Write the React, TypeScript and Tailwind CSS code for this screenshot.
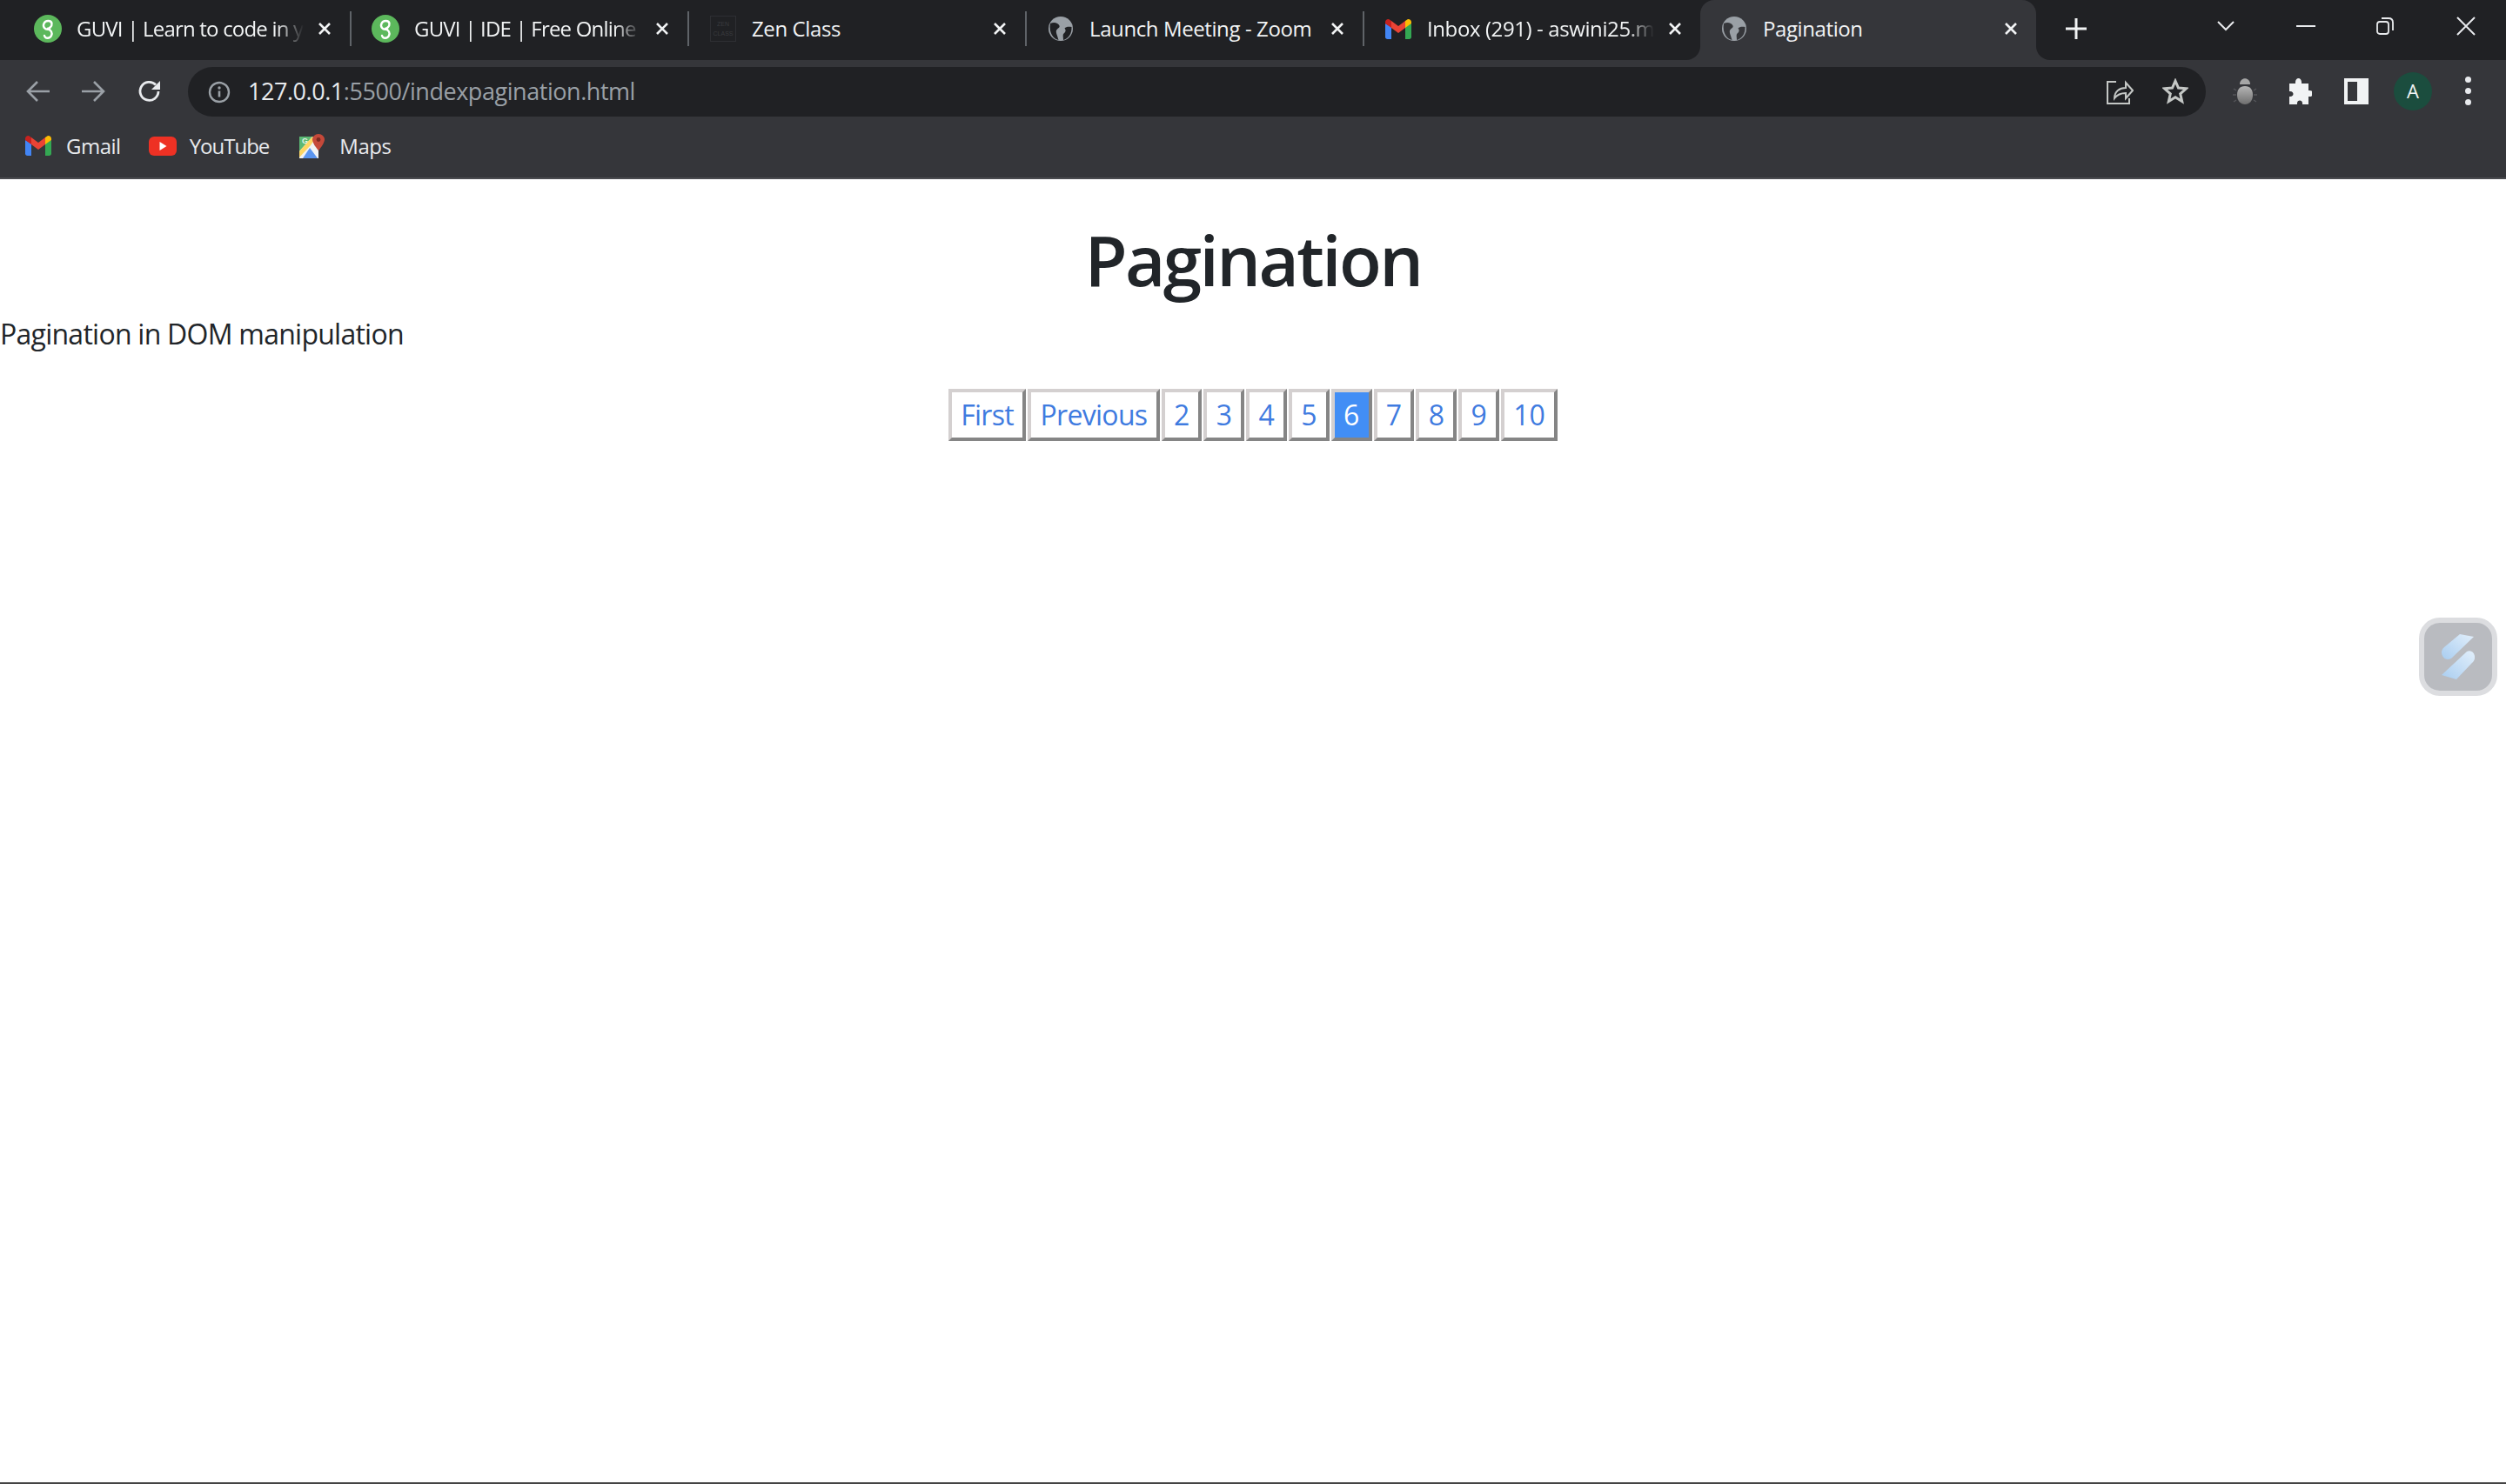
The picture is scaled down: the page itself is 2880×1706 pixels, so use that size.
import React from "react";

const uiFont = "font-['Open_Sans',sans-serif]";

function GuviIcon() {
  return (
    <svg width="32" height="32" viewBox="0 0 32 32">
      <circle cx="16" cy="16" r="16" fill="#5cb85c" />
      <path
        d="M18 16.500C12 18 10 13 11.500 10c1.500-4 8.500-4 9 0 .5 4-3.500 6-5.500 6 5 1 6.500 5 5 8-2 4-7 3.500-8 0"
        fill="none"
        stroke="#fff"
        strokeWidth="2.400"
        strokeLinecap="round"
      />
    </svg>
  );
}

function ZenIcon() {
  return (
    <div className="w-[30px] h-[30px] border border-[#2e2f33] flex flex-col items-center justify-center text-[7px] leading-[11px] text-[#3a3b3f] font-['Liberation_Sans',sans-serif]">
      <span>ZEN</span>
      <span>CLASS</span>
    </div>
  );
}

function GlobeIcon({ dark = "#202124" }: { dark?: string }) {
  return (
    <svg width="30" height="30" viewBox="0 0 30 30">
      <circle cx="15" cy="15" r="14" fill="#9aa0a6" />
      <path d="M3 9c4-2 9-1 10.500 2.500C14.500 14 11 14.500 10 17c-.8 2.500 1 5 2.500 11C7 27 1 20 3 9z" fill={dark} />
      <path d="M27.500 13c-3-.5-6.500-.5-8 1.500 2 2.500 1 4.500-1 6-1.500 1.500-.5 4-.5 7.500 6-1.500 10-7.500 9.500-15z" fill={dark} />
    </svg>
  );
}

function GmailIcon() {
  return (
    <svg width="30" height="23" viewBox="0 0 30 23">
      <path d="M0 5v15.500C0 22 1 23 2.500 23H7V9z" fill="#4285f4" />
      <path d="M30 5v15.500c0 1.500-1 2.500-2.500 2.500H23V9z" fill="#34a853" />
      <path d="M23 2v8l7-5V3.500C30 .5 26.500-1 24.500 1z" fill="#fbbc04" />
      <path d="M7 2v8l8 6 8-6V2l-8 6z" fill="#ea4335" />
      <path d="M0 3.500V5l7 5V2L5.500 1C3.500-1 0 .5 0 3.500z" fill="#c5221f" />
    </svg>
  );
}

function YoutubeIcon() {
  return (
    <svg width="32" height="22" viewBox="0 0 32 22">
      <rect width="32" height="22" rx="6" fill="#ee3124" />
      <path d="M12.500 6l8 5-8 5z" fill="#fff" />
    </svg>
  );
}

function MapsIcon() {
  return (
    <svg width="29" height="28" viewBox="0 0 29 28">
      <path d="M0 3h22v25H0z" fill="#f1f3f4" />
      <path d="M0 3h15L0 20z" fill="#5bb974" />
      <path d="M14 3h8v8l-4 3z" fill="#8ab4a0" />
      <path d="M0 20L15 3l3 3 -5 7L0 27z" fill="#fdd663" />
      <path d="M4 28l8-12 9 12z" fill="#5a95f0" />
      <text x="3" y="11" fontSize="9" fontWeight="700" fill="#e8f5e9" fontFamily="Liberation Sans, sans-serif">G</text>
      <path d="M22 0c-4 0-7 3-7 6.500C15 11 22 19 22 19s7-8 7-12.500C29 3 26 0 22 0z" fill="#c5493a" />
      <circle cx="22" cy="6.500" r="2.400" fill="#7a2a20" />
    </svg>
  );
}

function BugIcon() {
  return (
    <svg width="28" height="30" viewBox="0 0 28 30">
      <defs>
        <linearGradient id="bug" x1="0" y1="0" x2="0" y2="1">
          <stop offset="0" stopColor="#b5b5b5" />
          <stop offset="1" stopColor="#6f6f6f" />
        </linearGradient>
      </defs>
      <path d="M8 7c0-9 12-9 12 0z" fill="#a6a6a6" />
      <path d="M14 9c6 0 9 4 9 10 0 7-4 11-9 11s-9-4-9-11c0-6 3-10 9-10z" fill="url(#bug)" />
      <path d="M1 12l3 2M27 12l-3 2M0 19h4M28 19h-4M1 27l3-2M27 27l-3-2" stroke="#55565a" strokeWidth="1.500" fill="none" />
    </svg>
  );
}

function Close() {
  return (
    <svg width="20" height="20" viewBox="0 0 20 20" className="shrink-0 mr-[2px]">
      <path d="M4 4l12 12M16 4L4 16" stroke="#f1f3f4" strokeWidth="2.600" />
    </svg>
  );
}

function Tab({
  icon,
  title,
  fade = false,
  tight = false,
  active = false,
}: {
  icon: React.ReactNode;
  title: string;
  fade?: boolean;
  tight?: boolean;
  active?: boolean;
}) {
  return (
    <div className={`relative w-[386px] h-[69px] flex items-center pl-[23px] pr-[17px] pb-[3px] shrink-0 ${active ? "bg-[#35363a] rounded-t-[16px]" : ""}`}>
      <div className="w-[32px] h-[32px] flex items-center justify-center shrink-0">{icon}</div>
      <div
        className={`ml-[17px] mr-[14px] flex-1 min-w-0 whitespace-nowrap overflow-hidden text-[#f1f3f4] text-[24px] ${
          tight ? "tracking-[-0.8px]" : "tracking-[-0.4px]"
        } ${fade ? "[mask-image:linear-gradient(to_right,#000_88%,transparent)]" : ""}`}
      >
        {title}
      </div>
      <Close />
      {active && (
        <>
          <div className="absolute left-[-16px] bottom-0 w-[16px] h-[16px] bg-[#35363a]">
            <div className="w-full h-full bg-[#202124] rounded-br-[16px]" />
          </div>
          <div className="absolute right-[-16px] bottom-0 w-[16px] h-[16px] bg-[#35363a]">
            <div className="w-full h-full bg-[#202124] rounded-bl-[16px]" />
          </div>
        </>
      )}
    </div>
  );
}

function TabDivider() {
  return <div className="w-[2px] h-[40px] mb-[3px] bg-[#5f6368] shrink-0" />;
}

function TabStrip() {
  return (
    <div className="h-[69px] bg-[#202124] flex items-center pl-[16px] shrink-0">
      <Tab icon={<GuviIcon />} title="GUVI | Learn to code in your native language" fade tight />
      <TabDivider />
      <Tab icon={<GuviIcon />} title="GUVI | IDE | Free Online Compiler" fade tight />
      <TabDivider />
      <Tab icon={<ZenIcon />} title="Zen Class" />
      <TabDivider />
      <Tab icon={<GlobeIcon />} title="Launch Meeting - Zoom" />
      <TabDivider />
      <Tab icon={<GmailIcon />} title="Inbox (291) - aswini25.mano@gmail.com" fade />
      <Tab icon={<GlobeIcon dark="#35363a" />} title="Pagination" active />
      <svg width="28" height="28" viewBox="0 0 28 28" className="ml-[32px] mb-[3px] shrink-0">
        <path d="M14 2v24M2 14h24" stroke="#f1f3f4" strokeWidth="3" />
      </svg>
      <div className="ml-auto flex items-center h-full pb-[10px]">
        <svg width="22" height="14" viewBox="0 0 22 14" className="mr-[70px]">
          <path d="M2 2l9 9 9-9" fill="none" stroke="#e8eaed" strokeWidth="2" />
        </svg>
        <svg width="22" height="4" viewBox="0 0 22 4" className="mr-[70px]">
          <path d="M0 2h22" stroke="#e8eaed" strokeWidth="2" />
        </svg>
        <svg width="20" height="20" viewBox="0 0 20 20" className="mr-[72px]">
          <rect x="1" y="5" width="13" height="14" rx="3" fill="none" stroke="#e8eaed" strokeWidth="1.800" />
          <path d="M6 1h8c3 0 5 2 5 5v9" fill="none" stroke="#e8eaed" strokeWidth="1.800" />
        </svg>
        <svg width="22" height="22" viewBox="0 0 22 22" className="mr-[35px]">
          <path d="M1 1l20 20M21 1L1 21" stroke="#e8eaed" strokeWidth="2" />
        </svg>
      </div>
    </div>
  );
}

function Toolbar() {
  return (
    <div className="h-[65px] bg-[#35363a] flex items-center pt-[8px] shrink-0">
      <div className="w-[216px] flex items-center pl-[29px] pb-[2px] shrink-0">
        <svg width="30" height="28" viewBox="0 0 30 28">
          <path d="M28 14H4M14 3L3 14l11 11" fill="none" stroke="#9aa0a6" strokeWidth="2.600" />
        </svg>
        <svg width="30" height="28" viewBox="0 0 30 28" className="ml-[33px]">
          <path d="M2 14h24M16 3l11 11-11 11" fill="none" stroke="#9aa0a6" strokeWidth="2.600" />
        </svg>
        <svg width="30" height="30" viewBox="0 0 30 30" className="ml-[35px]">
          <path d="M25 15a10.500 10.500 0 1 1-3-7.500" fill="none" stroke="#e8eaed" strokeWidth="2.800" />
          <path d="M27 3v10H17z" fill="#e8eaed" />
        </svg>
      </div>
      <div className="w-[2319px] h-[57px] bg-[#202124] rounded-full flex items-center pl-[23px] pr-[17px] shrink-0">
        <svg width="26" height="26" viewBox="0 0 26 26" className="shrink-0">
          <circle cx="13" cy="13" r="11" fill="none" stroke="#9aa0a6" strokeWidth="2.400" />
          <path d="M13 11.500v7" stroke="#9aa0a6" strokeWidth="2.600" />
          <circle cx="13" cy="8" r="1.700" fill="#9aa0a6" />
        </svg>
        <div className="ml-[20px] text-[27px] tracking-[-0.45px] whitespace-nowrap">
          <span className="text-[#e8eaed]">127.0.0.1</span>
          <span className="text-[#9aa0a6]">:5500/indexpagination.html</span>
        </div>
        <svg width="32" height="32" viewBox="0 0 32 32" className="ml-auto mr-[33px] mb-[2px] shrink-0">
          <path d="M12 5H2v25h25v-6" fill="none" stroke="#c4c7c5" strokeWidth="2" />
          <path d="M10 24c0-8 6-12 13-12V6l8 9-8 9v-6c-6 0-10 2-13 6z" fill="none" stroke="#c4c7c5" strokeWidth="2" />
        </svg>
        <svg width="30" height="30" viewBox="0 0 30 30" className="shrink-0 mr-[3px] mb-[2px]">
          <path d="M15 3l3.500 8 9 .800-6.800 6 2 8.700L15 21.800 7.300 26.500l2-8.700-6.800-6 9-.800z" fill="none" stroke="#c4c7c5" strokeWidth="3" />
        </svg>
      </div>
      <div className="flex items-center pl-[31px] pb-[2px]">
        <BugIcon />
        <svg width="30" height="32" viewBox="0 0 30 32" className="ml-[33px]">
          <path d="M11 7c-1-8 8-8 7 0h8v8c7-1 7 8 0 7v9h-7c1-6-7-6-6 0H4v-9c6 1 6-7 0-6V7z" fill="#f1f3f4" />
        </svg>
        <svg width="28" height="30" viewBox="0 0 28 30" className="ml-[37px]">
          <path fillRule="evenodd" d="M0 0h28v30H0zM4 4v22h11V4z" fill="#f1f3f4" />
        </svg>
        <div className="ml-[29px] w-[44px] h-[44px] rounded-full bg-[#1b4d3e] flex items-center justify-center text-[#f1f3f4] text-[22px]">A</div>
        <div className="ml-[38px] flex flex-col gap-[6px]">
          <div className="w-[7px] h-[7px] rounded-full bg-[#e8eaed]" />
          <div className="w-[7px] h-[7px] rounded-full bg-[#e8eaed]" />
          <div className="w-[7px] h-[7px] rounded-full bg-[#e8eaed]" />
        </div>
      </div>
    </div>
  );
}

function BookmarksBar() {
  return (
    <div className="h-[72px] bg-[#35363a] flex items-center pl-[29px] pb-[3px] text-[#e8eaed] text-[24px] tracking-[-0.5px] border-b-2 border-[#4a4b4f] shrink-0">
      <GmailIcon />
      <span className="ml-[17px]">Gmail</span>
      <div className="ml-[32px]"><YoutubeIcon /></div>
      <span className="ml-[15px] tracking-[-1px]">YouTube</span>
      <div className="ml-[35px]"><MapsIcon /></div>
      <span className="ml-[17px]">Maps</span>
    </div>
  );
}

const pages = ["First", "Previous", "2", "3", "4", "5", "6", "7", "8", "9", "10"];

function Pagination() {
  return (
    <div className="flex justify-center mt-[39px] gap-[2px]">
      {pages.map((label) => (
        <div
          key={label}
          className={`h-[60px] px-[10.25px] flex items-center text-[32px] border-4 border-t-[#d4d0d0] border-l-[#d4d0d0] border-r-[#858585] border-b-[#858585] ${
            label.length > 2 ? "tracking-[-0.7px]" : ""
          } ${label === "6" ? "bg-[#428ef5] text-white" : "bg-white text-[#3f7be0]"}`}
        >
          {label}
        </div>
      ))}
    </div>
  );
}

export default function App() {
  return (
    <div className={`relative w-[2880px] h-[1706px] overflow-hidden flex flex-col bg-white ${uiFont}`}>
      <TabStrip />
      <Toolbar />
      <BookmarksBar />
      <main className="flex-1 border-b-2 border-[#444] text-[#212529]">
        <h1 className="text-center text-[80px] font-semibold leading-[96px] mt-[44px] tracking-[-2.6px]">Pagination</h1>
        <p className="text-[32px] leading-[48px] mt-[14px] tracking-[-0.75px]">Pagination in DOM manipulation</p>
        <Pagination />
      </main>
      <div className="absolute left-[2780px] top-[710px] w-[90px] h-[90px] rounded-[24px] bg-[#b9bbc0] border-[6px] border-[#dcdde0] flex items-center justify-center">
        <svg width="38" height="52" viewBox="0 0 38 52">
          <defs>
            <linearGradient id="swoosh" x1="0" y1="1" x2="1" y2="0">
              <stop offset="0" stopColor="#a9cdf0" />
              <stop offset="1" stopColor="#e2effb" />
            </linearGradient>
          </defs>
          <path d="M21 0l16 3-26 25c-4 2-8 1-10-3s-1-7 2-10z" fill="url(#swoosh)" />
          <path d="M29 20c4-2 8 0 9 5 .5 3-.5 6-3 8L17 52 0 47z" fill="url(#swoosh)" />
        </svg>
      </div>
    </div>
  );
}
